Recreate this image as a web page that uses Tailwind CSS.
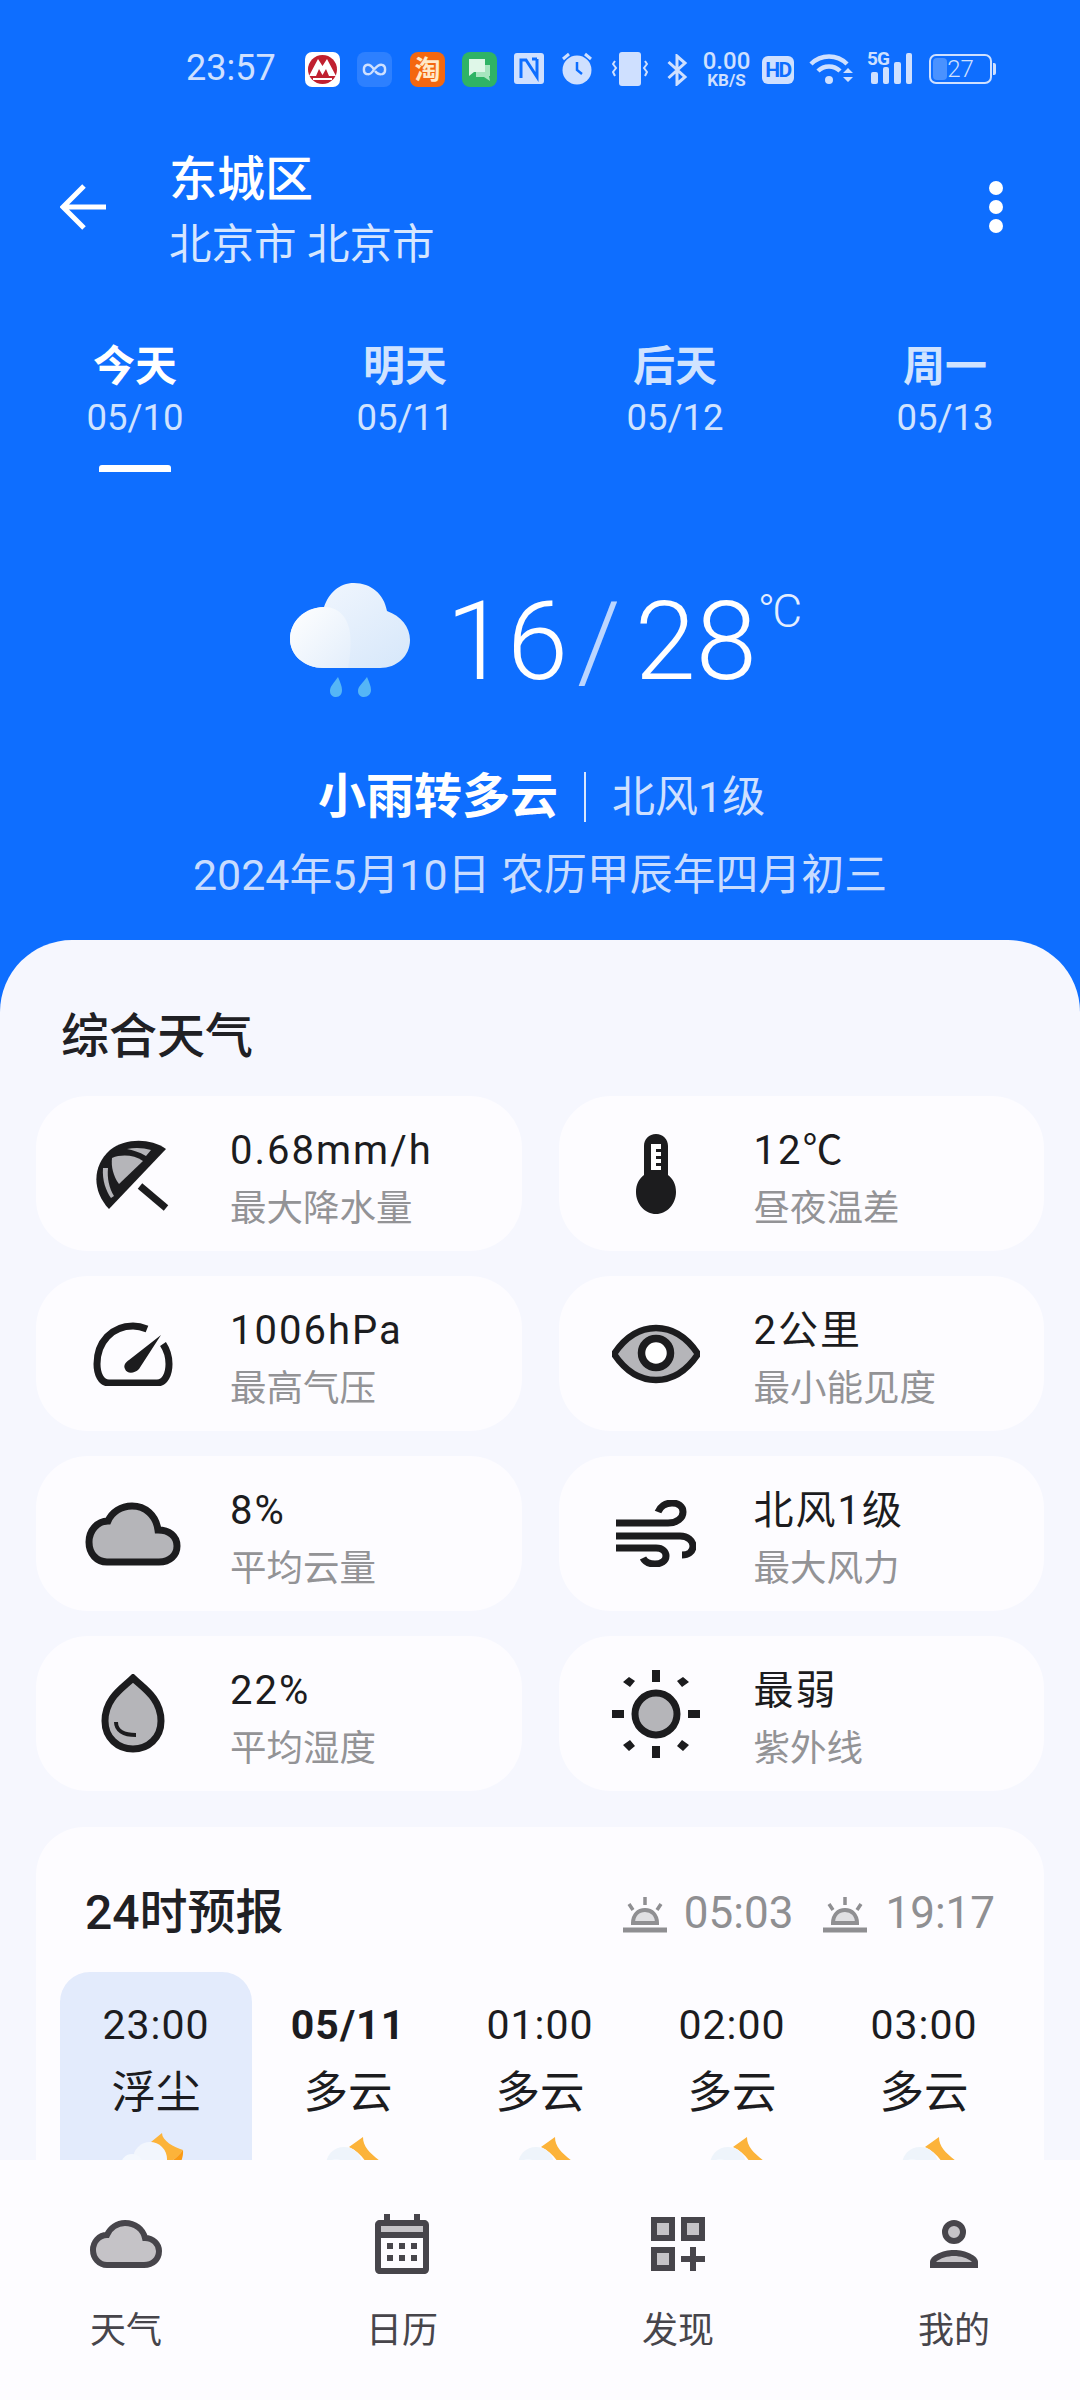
<!DOCTYPE html>
<html lang="zh-CN">
<head>
<meta charset="utf-8">
<script src="https://cdn.jsdelivr.net/npm/@tailwindcss/browser@4"></script>
</head>
<body>
<div class="w-[1080px] h-[2400px] overflow-hidden flex flex-col bg-[#0e6eff] font-['Roboto','Noto_Sans_CJK_SC',sans-serif]">

  <!-- status bar -->
  <div class="h-[149px] pt-[49px] pl-[186px] flex items-start text-[#cfe0ff] shrink-0">
    <div class="w-[119px] h-[38px] flex items-center text-[36px] leading-none">23:57</div>
    <svg class="w-[35px] h-[35px] mt-[3px]" viewBox="0 0 35 35"><rect width="35" height="35" rx="7" fill="#fff"/><circle cx="17.5" cy="17.5" r="14.5" fill="#c0202f"/><path d="M4 24 L13 7 L17.5 14 L22 7 L31 24 H24 L21 17 L17.5 23 L14 17 L11 24Z" fill="#fff"/><path d="M8 26 H27 V28 H8Z" fill="#fff"/></svg>
    <svg class="w-[35px] h-[35px] mt-[3px] ml-[17px]" viewBox="0 0 35 35"><rect width="35" height="35" rx="8" fill="#2d80ff"/><path d="M17 17.5 C14 13 11 12.5 9.5 13 C6 14 6 21 9.5 22 C12 23 15 21 17 17.5 C20 14 23 12 25.5 13 C29 14 29 21 25.5 22 C23 23 20 21.500 18 19" fill="none" stroke="#cfe0ff" stroke-width="2.400"/></svg>
    <div class="w-[35px] h-[35px] mt-[3px] ml-[18px] rounded-[8px] bg-[#f4670f] flex items-center justify-center text-[26px] leading-none text-[#ffe9c9] font-bold">淘</div>
    <svg class="w-[35px] h-[35px] mt-[3px] ml-[17px]" viewBox="0 0 35 35"><rect width="35" height="35" rx="8" fill="#2fb365"/><path d="M14 13 H28 V24 H27 L28 29 L22 25 H14Z" fill="#a7e6bf"/><path d="M7 7 H23 V20 H12 L7 24Z" fill="#dff7e8"/></svg>
    <svg class="w-[30px] h-[31px] mt-[4px] ml-[17px]" viewBox="0 0 30 31"><rect width="30" height="31" rx="3" fill="#cfe0ff"/><path d="M7 25 V7 L12 7 L23 24 V6 M18 6 H23" fill="none" stroke="#0e6eff" stroke-width="3"/></svg>
    <svg class="w-[32px] h-[33px] mt-[3px] ml-[17px]" viewBox="0 0 32 33"><circle cx="16" cy="18" r="14.500" fill="#cfe0ff"/><path d="M16 10 V18 L21 22" fill="none" stroke="#0e6eff" stroke-width="2.500"/><path d="M2 7 L8 2 M30 7 L24 2" stroke="#cfe0ff" stroke-width="3"/></svg>
    <svg class="w-[36px] h-[34px] mt-[3px] ml-[19px]" viewBox="0 0 36 34"><rect x="7" y="0" width="22" height="34" rx="3" fill="#cfe0ff"/><path d="M3 9 L1 12 L4 16 L1 20 L3 24 M33 9 L35 12 L32 16 L35 20 L33 24" fill="none" stroke="#cfe0ff" stroke-width="2"/></svg>
    <svg class="w-[21px] h-[32px] mt-[5px] ml-[19px]" viewBox="0 0 21 32"><path d="M1.500 8 L18 23 L10 30 V2 L18 9 L1.500 24" fill="none" stroke="#cfe0ff" stroke-width="3"/></svg>
    <div class="w-[51px] ml-[13px] mt-[2px] flex flex-col items-center font-medium">
      <div class="text-[24px] leading-[21px] h-[21px]">0.00</div>
      <div class="text-[17px] leading-[16px] h-[16px] font-bold">KB/S</div>
    </div>
    <div class="w-[32px] h-[28px] mt-[7px] ml-[10px] rounded-[6px] bg-[#cfe0ff] text-[#0e6eff] text-[21px] leading-[28px] font-bold text-center tracking-[-1.5px]">HD</div>
    <svg class="w-[46px] h-[34px] mt-[3px] ml-[15px]" viewBox="0 0 46 34"><path d="M2 12 C12 2 28 2 38 12 M9 19 C15 13 25 13 31 19" fill="none" stroke="#cfe0ff" stroke-width="4.500"/><circle cx="20" cy="28" r="4" fill="#cfe0ff"/><path d="M34 21 L39 16 L44 21Z M34 25 H44 L39 30Z" fill="#cfe0ff"/></svg>
    <div class="w-[48px] h-[34px] mt-[1px] ml-[12px] relative">
      <div class="text-[19px] leading-[18px] font-bold tracking-[-1px]">5G</div>
      <svg class="absolute left-0 top-[2px] w-[46px] h-[34px]" viewBox="0 0 46 34"><rect x="4" y="20" width="7" height="12" rx="2" fill="#cfe0ff"/><rect x="16" y="15" width="6" height="17" rx="2" fill="#cfe0ff"/><rect x="27" y="10" width="7" height="22" rx="2" fill="#cfe0ff"/><rect x="39" y="1" width="6" height="31" rx="2" fill="#cfe0ff"/></svg>
    </div>
    <div class="w-[67px] h-[30px] mt-[5px] ml-[14px] flex items-center relative">
      <div class="w-[63px] h-[30px] rounded-[7px] border-2 border-[#cfe0ff] p-[2px]">
        <div class="w-[14px] h-full bg-[#4a92ff] rounded-[4px]"></div>
      </div>
      <div class="w-[3px] h-[12px] ml-[1px] bg-[#cfe0ff] rounded-r-[2px]"></div>
      <span class="absolute left-0 top-0 w-[63px] h-[30px] flex items-center justify-center text-[#cfe0ff] text-[24px] leading-none font-light">27</span>
    </div>
  </div>

  <!-- title -->
  <div class="h-[130px] pl-[60px] pr-[77px] flex items-center justify-between shrink-0">
    <div class="flex items-center">
      <svg class="w-[48px] h-[46px] mb-[14px]" viewBox="0 0 48 46"><path d="M46 23 H4 M24 2 L3 23 L24 44" fill="none" stroke="#fff" stroke-width="5"/></svg>
      <div class="ml-[61px] text-white">
        <div class="text-[48px] leading-[62px] font-medium">东城区</div>
        <div class="text-[42.500px] leading-[68px] text-[#d6e6ff] whitespace-pre">北京市 北京市</div>
      </div>
    </div>
    <div class="flex flex-col gap-[5px] items-center mb-[14px]">
      <div class="w-[14px] h-[14px] bg-white rounded-full"></div>
      <div class="w-[14px] h-[14px] bg-white rounded-full"></div>
      <div class="w-[14px] h-[14px] bg-white rounded-full"></div>
    </div>
  </div>

  <!-- day tabs -->
  <div class="mt-[63px] h-[128px] grid grid-cols-4 w-[1080px] shrink-0 text-[#d0e3ff]">
    <div class="flex flex-col items-center text-white w-[270px]">
      <div class="text-[42px] leading-[50px] font-bold">今天</div>
      <div class="text-[36.500px] leading-[46px] text-[#d0e3ff] mt-[3px]">05/10</div>
      <div class="w-[72px] h-[7px] bg-white rounded-t-[3px] mt-[24px]"></div>
    </div>
    <div class="flex flex-col items-center w-[270px]">
      <div class="text-[42px] leading-[50px] font-bold">明天</div>
      <div class="text-[36.500px] leading-[46px] mt-[3px]">05/11</div>
    </div>
    <div class="flex flex-col items-center w-[270px]">
      <div class="text-[42px] leading-[50px] font-bold">后天</div>
      <div class="text-[36.500px] leading-[46px] mt-[3px]">05/12</div>
    </div>
    <div class="flex flex-col items-center w-[270px]">
      <div class="text-[42px] leading-[50px] font-bold">周一</div>
      <div class="text-[36.500px] leading-[46px] mt-[3px]">05/13</div>
    </div>
  </div>

  <!-- today summary -->
  <div class="mt-[111px] h-[130px] pl-[290px] flex items-start shrink-0">
    <svg class="w-[120px] h-[114px] mt-[2px]" viewBox="0 0 120 114">
      <defs>
        <linearGradient id="c1" x1="0" y1="0" x2="1" y2="1"><stop offset="0" stop-color="#ffffff"/><stop offset="1" stop-color="#e3eefb"/></linearGradient>
        <linearGradient id="c2" x1="0" y1="0" x2="1" y2="1"><stop offset="0" stop-color="#f4f8fe"/><stop offset="1" stop-color="#d6e7fa"/></linearGradient>
      </defs>
      <path d="M34 85 C14 85 0 72 0 56 C0 40 13 25 34 24 C39 10 49 0 64 0 C81 0 94 11 97 28 C111 33 120 44 120 57 C120 73 107 85 90 85Z" fill="url(#c2)"/>
      <path d="M34 85 C14 85 0 72 0 56 C0 38 15 24 34 24 C50 24 58 36 60 50 C62 66 58 85 58 85Z" fill="url(#c1)"/>
      <path d="M48 94 C44 100 40 103 40 108 C40 112 43 114 46 114 C50 114 52 111 52 107 C52 103 50 99 48 94Z M77 94 C73 100 68 103 68 108 C68 112 71 114 74 114 C78 114 81 111 81 107 C81 103 79 99 77 94Z" fill="#55b6f6"/>
    </svg>
    <div class="ml-[36px] mt-[12px] text-white font-light text-[110px] leading-[100px] flex items-start whitespace-nowrap h-[100px]">
      <span class="mt-[-1px]">16</span>
      <span class="mx-[9px] mt-[-1px] text-[#bcd6ff]">/</span>
      <span class="mt-[-1px] ml-[5px]">28</span>
      <span class="text-[46px] leading-[46px] text-[#e4eeff] ml-[1px] -mt-[5px] tracking-[-3px]">°C</span>
    </div>
  </div>

  <div class="mt-[51px] pl-[318px] h-[70px] flex items-center shrink-0">
    <span class="text-[48px] leading-none font-bold text-white">小雨转多云</span>
    <span class="w-[2px] h-[50px] ml-[26px] bg-[#d7e6ff]"></span>
    <span class="ml-[26px] text-[43px] leading-none text-[#cfe0ff]">北风1级</span>
  </div>
  <div class="mt-[14px] h-[58px] flex items-center justify-center text-[42.900px] leading-none text-[#c8dcff] shrink-0">2024年5月10日 农历甲辰年四月初三</div>

  <!-- sheet -->
  <div class="mt-[36px] flex-1 min-h-0 overflow-hidden rounded-t-[72px] bg-[#f6f7fe] flex flex-col">
    <div class="h-[156px] pl-[61px] pt-[68px] shrink-0 text-[48px] leading-[58px] font-medium text-[#202024]">综合天气</div>

    <div class="px-[36px] grid grid-cols-2 gap-x-[37px] gap-y-[25px] shrink-0">
      <!-- card -->
      <div class="h-[155px] rounded-[52px] bg-[#fdfcff] flex items-center">
        <div class="w-[194px] flex justify-center items-center">
          <svg class="w-[78px] h-[76px]" viewBox="0 0 78 76"><path d="M15 73 C-2 55 -2 30 16 14 C32 2 56 2 72 13Z" fill="#1c1c1e"/><path d="M18 22 C28 18 40 19 49 25 L25 48 C19 40 17 30 18 22Z" fill="#b5b5b9"/><path d="M9 32 C8 44 12 55 17 62 L20 60 C15 52 13 42 14 32Z" fill="#b5b5b9"/><path d="M33 13 C42 11 50 12 57 14 L52 20 C45 16 39 14 33 13Z" fill="#b5b5b9"/><path d="M46 50 L72 72" stroke="#1c1c1e" stroke-width="7"/></svg>
        </div>
        <div class="pt-[13px]">
          <div class="text-[40px] leading-[44px] text-[#1c1c20] tracking-[2px]">0.68mm/h</div>
          <div class="mt-[13px] text-[36.500px] leading-[46px] text-[#939396]">最大降水量</div>
        </div>
      </div>
      <div class="h-[155px] rounded-[52px] bg-[#fdfcff] flex items-center">
        <div class="w-[195px] flex justify-center items-center">
          <svg class="w-[40px] h-[80px]" viewBox="0 0 40 80"><path d="M8 41 V12 C8 5 13 0 20 0 C27 0 32 5 32 12 V41 C37 45 40 50 40 58 C40 70 31 80 20 80 C9 80 0 70 0 58 C0 50 3 45 8 41Z" fill="#1c1c1e"/><path d="M15 10 H25 V36 H15Z" fill="#fff"/><path d="M20 15 H25 V18 H20Z M20 22 H25 V25 H20Z M20 29 H25 V32 H20Z" fill="#1c1c1e"/></svg>
        </div>
        <div class="pt-[13px]">
          <div class="text-[40px] leading-[44px] text-[#1c1c20] tracking-[2px]">12℃</div>
          <div class="mt-[13px] text-[36.500px] leading-[46px] text-[#939396]">昼夜温差</div>
        </div>
      </div>

      <div class="h-[155px] rounded-[52px] bg-[#fdfcff] flex items-center">
        <div class="w-[194px] flex justify-center items-center">
          <svg class="w-[80px] h-[64px]" viewBox="0 0 80 64"><path d="M54 7 C49 5 44 4 40 4 C19 4 4 20 4 42 C4 52 8 61 16 61 H64 C72 61 76 52 76 42 C76 34 74 28 70 22" fill="none" stroke="#1c1c1e" stroke-width="7"/><path d="M68 13 L46 47 C41 52 34 52 32 47 C30 43 33 40 36 38Z" fill="#1c1c1e"/></svg>
        </div>
        <div class="pt-[13px]">
          <div class="text-[40px] leading-[44px] text-[#1c1c20] tracking-[2px]">1006hPa</div>
          <div class="mt-[13px] text-[36.500px] leading-[46px] text-[#939396]">最高气压</div>
        </div>
      </div>
      <div class="h-[155px] rounded-[52px] bg-[#fdfcff] flex items-center">
        <div class="w-[195px] flex justify-center items-center">
          <svg class="w-[88px] h-[60px]" viewBox="0 0 88 60"><path d="M2 30 C14 12 29 4 44 4 C59 4 74 12 86 30 C74 48 59 56 44 56 C29 56 14 48 2 30Z" fill="#b5b5b9" stroke="#1c1c1e" stroke-width="6.500" stroke-linejoin="round"/><circle cx="44" cy="29" r="14.500" fill="#fff" stroke="#1c1c1e" stroke-width="7.500"/></svg>
        </div>
        <div class="pt-[13px]">
          <div class="text-[40px] leading-[44px] text-[#1c1c20] tracking-[2px]">2公里</div>
          <div class="mt-[13px] text-[36.500px] leading-[46px] text-[#939396]">最小能见度</div>
        </div>
      </div>

      <div class="h-[155px] rounded-[52px] bg-[#fdfcff] flex items-center">
        <div class="w-[194px] flex justify-center items-center">
          <svg class="w-[96px] h-[64px]" viewBox="0 0 96 64"><path d="M22 60 H74 C85 60 92 53 92 44 C92 34 84 28 73 28 C71 13 60 4 47 4 C36 4 27 10 23 19 C12 19 4 29 4 40 C4 52 12 60 22 60Z" fill="#b5b5b9" stroke="#1c1c1e" stroke-width="7"/></svg>
        </div>
        <div class="pt-[13px]">
          <div class="text-[40px] leading-[44px] text-[#1c1c20] tracking-[2px]">8%</div>
          <div class="mt-[13px] text-[36.500px] leading-[46px] text-[#939396]">平均云量</div>
        </div>
      </div>
      <div class="h-[155px] rounded-[52px] bg-[#fdfcff] flex items-center">
        <div class="w-[195px] flex justify-center items-center">
          <svg class="w-[80px] h-[67px]" viewBox="0 0 80 67"><path d="M0 23 H52 C61 23 67 18 67 12 C67 6 62 3 56 3 C49 3 44 7 42 12 M0 36 H64 C72 36 77 41 77 46 C77 52 72 55 66 55 M0 48 H40 C47 48 50 52 50 56 C50 61 45 64 39 64 C33 64 29 62 27 58" fill="none" stroke="#1c1c1e" stroke-width="7"/></svg>
        </div>
        <div class="pt-[13px]">
          <div class="text-[40px] leading-[44px] text-[#1c1c20] tracking-[2px]">北风1级</div>
          <div class="mt-[13px] text-[36.500px] leading-[46px] text-[#939396]">最大风力</div>
        </div>
      </div>

      <div class="h-[155px] rounded-[52px] bg-[#fdfcff] flex items-center">
        <div class="w-[194px] flex justify-center items-center">
          <svg class="w-[64px] h-[79px]" viewBox="0 0 64 79"><path d="M32 4 C42 14 60 24 60 47 C60 64 47 75 32 75 C17 75 4 64 4 47 C4 24 22 14 32 4Z" fill="#b5b5b9" stroke="#1c1c1e" stroke-width="7"/><path d="M15 48 C15 56 22 61 35 61" fill="none" stroke="#1c1c1e" stroke-width="4"/></svg>
        </div>
        <div class="pt-[13px]">
          <div class="text-[40px] leading-[44px] text-[#1c1c20] tracking-[2px]">22%</div>
          <div class="mt-[13px] text-[36.500px] leading-[46px] text-[#939396]">平均湿度</div>
        </div>
      </div>
      <div class="h-[155px] rounded-[52px] bg-[#fdfcff] flex items-center">
        <div class="w-[195px] flex justify-center items-center">
          <svg class="w-[88px] h-[88px]" viewBox="0 0 88 88"><circle cx="44" cy="44" r="21" fill="#b5b5b9" stroke="#1c1c1e" stroke-width="7"/><path d="M40 0 H48 V12 H40Z M40 76 H48 V88 H40Z M0 40 H12 V48 H0Z M76 40 H88 V48 H76Z M17 7 L23 11 L18 17 L11 12Z M71 7 L77 12 L70 17 L65 11Z M11 75 L18 70 L23 76 L17 81Z M70 70 L77 75 L71 81 L65 76Z" fill="#1c1c1e"/></svg>
        </div>
        <div class="pt-[13px]">
          <div class="text-[40px] leading-[44px] text-[#1c1c20] tracking-[2px]">最弱</div>
          <div class="mt-[13px] text-[36.500px] leading-[46px] text-[#939396]">紫外线</div>
        </div>
      </div>
    </div>

    <!-- 24h forecast -->
    <div class="mt-[36px] mx-[36px] flex-1 rounded-t-[48px] bg-[#fdfcff] overflow-hidden">
      <div class="h-[145px] pl-[49px] pr-[49px] pt-[57px] flex items-start justify-between">
        <div class="text-[48px] leading-[58px] font-medium text-[#202024]">24时预报</div>
        <div class="flex items-center h-[58px] text-[#8f8f92] text-[44px] leading-none">
          <svg class="w-[46px] h-[36px] mt-[3px]" viewBox="0 0 46 36"><path d="M1 33 H45" stroke="#8f8f92" stroke-width="5"/><path d="M11 26 C11 18 16 13 23 13 C30 13 35 18 35 26Z" fill="#e0e0e3" stroke="#8f8f92" stroke-width="4"/><path d="M23 0 V8 M7 7 L11 13 M39 7 L35 13" stroke="#8f8f92" stroke-width="3.500"/></svg>
          <span class="ml-[16px]">05:03</span>
          <svg class="w-[46px] h-[36px] mt-[3px] ml-[29px]" viewBox="0 0 46 36"><path d="M1 33 H45" stroke="#8f8f92" stroke-width="5"/><path d="M11 26 C11 18 16 13 23 13 C30 13 35 18 35 26Z" fill="#e0e0e3" stroke="#8f8f92" stroke-width="4"/><path d="M23 0 V8 M7 7 L11 13 M39 7 L35 13" stroke="#8f8f92" stroke-width="3.500"/></svg>
          <span class="ml-[17px]">19:17</span>
        </div>
      </div>
      <div class="pl-[24px] flex items-stretch h-[300px] text-[#1c1c20]">
        <div class="w-[192px] rounded-t-[30px] bg-[#e3ebfc] flex flex-col items-center pt-[30px]">
          <div class="text-[41px] leading-[46px] tracking-[1px]">23:00</div>
          <div class="mt-[22px] text-[44.500px] leading-[46px]">浮尘</div>
          <svg class="w-[76px] h-[76px] mt-[17px] shrink-0" viewBox="0 0 76 76"><path d="M33 9 L44 0 C44 8 56 14 65 17 C60 24 54 28 48 32 C48 22 42 14 33 9Z" fill="#fcb33a"/><path d="M48 32 C54 28 60 24 65 17 C66 28 58 40 48 44Z" fill="#fb9a12"/><circle cx="32" cy="26" r="17" fill="#f2f6fd"/><circle cx="14" cy="32" r="11" fill="#f4f8fe"/></svg>
        </div>
        <div class="w-[192px] flex flex-col items-center pt-[30px]">
          <div class="text-[41px] leading-[46px] font-bold tracking-[1px]">05/11</div>
          <div class="mt-[22px] text-[44.500px] leading-[46px]">多云</div>
          <svg class="w-[76px] h-[76px] mt-[21px] shrink-0" viewBox="0 0 76 76"><path d="M39 10 L53 0 C53 10 60 16 70 24 L60 40 C60 28 52 16 39 10Z" fill="#fcb33a"/><circle cx="34" cy="28" r="18" fill="#eef4fb"/><circle cx="26" cy="32" r="10" fill="#f4f8fe"/></svg>
        </div>
        <div class="w-[192px] flex flex-col items-center pt-[30px]">
          <div class="text-[41px] leading-[46px] tracking-[1px]">01:00</div>
          <div class="mt-[22px] text-[44.500px] leading-[46px]">多云</div>
          <svg class="w-[76px] h-[76px] mt-[21px] shrink-0" viewBox="0 0 76 76"><path d="M39 10 L53 0 C53 10 60 16 70 24 L60 40 C60 28 52 16 39 10Z" fill="#fcb33a"/><circle cx="34" cy="28" r="18" fill="#eef4fb"/><circle cx="26" cy="32" r="10" fill="#f4f8fe"/></svg>
        </div>
        <div class="w-[192px] flex flex-col items-center pt-[30px]">
          <div class="text-[41px] leading-[46px] tracking-[1px]">02:00</div>
          <div class="mt-[22px] text-[44.500px] leading-[46px]">多云</div>
          <svg class="w-[76px] h-[76px] mt-[21px] shrink-0" viewBox="0 0 76 76"><path d="M39 10 L53 0 C53 10 60 16 70 24 L60 40 C60 28 52 16 39 10Z" fill="#fcb33a"/><circle cx="34" cy="28" r="18" fill="#eef4fb"/><circle cx="26" cy="32" r="10" fill="#f4f8fe"/></svg>
        </div>
        <div class="w-[192px] flex flex-col items-center pt-[30px]">
          <div class="text-[41px] leading-[46px] tracking-[1px]">03:00</div>
          <div class="mt-[22px] text-[44.500px] leading-[46px]">多云</div>
          <svg class="w-[76px] h-[76px] mt-[21px] shrink-0" viewBox="0 0 76 76"><path d="M39 10 L53 0 C53 10 60 16 70 24 L60 40 C60 28 52 16 39 10Z" fill="#fcb33a"/><circle cx="34" cy="28" r="18" fill="#eef4fb"/><circle cx="26" cy="32" r="10" fill="#f4f8fe"/></svg>
        </div>
      </div>
    </div>
  </div>

  <!-- bottom nav -->
  <div class="h-[240px] bg-[#fdfcff] shrink-0 flex pt-[54px] text-[#47454b] text-[36px] leading-none">
    <div class="flex -ml-[12px]">
      <div class="flex flex-col items-center w-[276px]">
        <div class="h-[60px] flex items-center"><svg class="w-[72px] h-[48px]" viewBox="0 0 72 48"><path d="M17 45 H54 C63 45 69 39 69 31 C69 24 63 18 55 18 C53 9 45 3 35 3 C27 3 20 8 17 15 C9 15 3 22 3 30 C3 38 9 45 17 45Z" fill="#c5c3c7" stroke="#47454b" stroke-width="6"/></svg></div>
        <div class="mt-[39px]">天气</div>
      </div>
      <div class="flex flex-col items-center w-[276px]">
        <div class="h-[60px]"><svg class="w-[54px] h-[60px]" viewBox="0 0 54 60"><path d="M9 0 H15 V6 H39 V0 H45 V6 H49 C52 6 54 8 54 11 V55 C54 58 52 60 49 60 H5 C2 60 0 58 0 55 V11 C0 8 2 6 5 6 H9Z" fill="#47454b"/><rect x="6" y="12" width="42" height="6" fill="#c5c3c7"/><rect x="6" y="24" width="42" height="30" fill="#fdfcff"/><path d="M12 29 H18 V35 H12Z M24 29 H30 V35 H24Z M36 29 H42 V35 H36Z M12 41 H18 V47 H12Z M24 41 H30 V47 H24Z M36 41 H42 V47 H36Z" fill="#47454b"/></svg></div>
        <div class="mt-[39px]">日历</div>
      </div>
      <div class="flex flex-col items-center w-[276px]">
        <div class="h-[60px] pt-[3px]"><svg class="w-[54px] h-[54px]" viewBox="0 0 54 54"><rect x="3" y="3" width="18" height="18" fill="#c5c3c7" stroke="#47454b" stroke-width="6"/><rect x="33" y="3" width="18" height="18" fill="#c5c3c7" stroke="#47454b" stroke-width="6"/><rect x="3" y="33" width="18" height="18" fill="#c5c3c7" stroke="#47454b" stroke-width="6"/><path d="M30 42 H54 M42 30 V54" stroke="#47454b" stroke-width="6"/></svg></div>
        <div class="mt-[39px]">发现</div>
      </div>
      <div class="flex flex-col items-center w-[276px]">
        <div class="h-[60px] pt-[6px]"><svg class="w-[48px] h-[48px]" viewBox="0 0 48 48"><circle cx="24" cy="12" r="9" fill="#c5c3c7" stroke="#47454b" stroke-width="6"/><path d="M0 48 V42 C0 36 12 30 24 30 C36 30 48 36 48 42 V48Z" fill="#47454b"/><path d="M6 42 C10 38 18 36 24 36 C30 36 38 38 42 42Z" fill="#c5c3c7"/></svg></div>
        <div class="mt-[39px]">我的</div>
      </div>
    </div>
  </div>
</div>
</body>
</html>
